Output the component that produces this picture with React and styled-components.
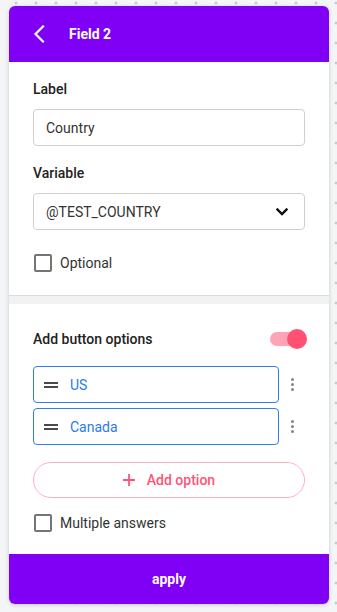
import React, { useState } from 'react';
import styled, { createGlobalStyle } from 'styled-components';

const GlobalStyle = createGlobalStyle`
  html, body {
    margin: 0;
    padding: 0;
  }
  body {
    font-family: Roboto, "Liberation Sans", sans-serif;
    background-color: #f3f5f7;
    background-image: radial-gradient(circle, #c8ccd1 1.3px, transparent 1.7px);
    background-size: 20px 20px;
    background-position: 6px -7px;
    min-height: 612px;
  }
  * {
    box-sizing: border-box;
  }
`;

const Page = styled.div`
  padding: 6px 0 0 9px;
  height: 612px;
`;

const Card = styled.div`
  width: 320px;
  height: 598px;
  background: #fff;
  border-radius: 6px;
  overflow: hidden;
  box-shadow: 0 1px 4px rgba(0, 0, 0, 0.18);
  display: flex;
  flex-direction: column;
`;

const Header = styled.div`
  height: 56px;
  background: #7f00f5;
  display: flex;
  align-items: center;
  padding-left: 24px;
  gap: 24px;
  color: #fff;
`;

const BackButton = styled.button`
  border: none;
  background: none;
  padding: 0;
  width: 12px;
  height: 18px;
  display: flex;
  cursor: pointer;
`;

const HeaderTitle = styled.h1`
  margin: 0;
  font-size: 14px;
  font-weight: 700;
  line-height: 20px;
`;

const Section = styled.div`
  padding: ${(p) => p.$pad};
  display: flex;
  flex-direction: column;
`;

const FieldLabel = styled.div`
  font-size: 14px;
  font-weight: 500;
  line-height: 20px;
  color: #222;
  margin: ${(p) => p.$top || 0}px 0 ${(p) => (p.$flat ? 0 : 10)}px;
`;

const Box = styled.div`
  height: 37px;
  border: 1px solid #cfcfcf;
  border-radius: 4px;
  display: flex;
  align-items: center;
  padding: 0 16px 0 12px;
  font-size: 14px;
  color: #333;
  justify-content: space-between;
`;

const CheckRow = styled.label`
  display: flex;
  align-items: center;
  gap: 8px;
  height: 18px;
  font-size: 14px;
  color: #333;
  margin-top: ${(p) => p.$top}px;
  cursor: pointer;
`;

const CheckBox = styled.span`
  width: 18px;
  height: 18px;
  border: 2px solid #757575;
  border-radius: 2px;
  margin-left: 1px;
`;

const Separator = styled.div`
  height: 9px;
  border-top: 1px solid #dcdcdc;
  background: #f2f2f2;
`;

const ToggleRow = styled.div`
  display: flex;
  align-items: center;
  justify-content: space-between;
  height: 20px;
`;

const Toggle = styled.button`
  position: relative;
  width: 37px;
  height: 20px;
  border: none;
  background: none;
  padding: 0;
  margin-right: -2px;
  cursor: pointer;

  &::before {
    content: '';
    position: absolute;
    left: 0;
    top: 3px;
    width: 30px;
    height: 14px;
    border-radius: 7px;
    background: ${(p) => (p.$on ? '#ffa4b6' : '#bdbdbd')};
  }

  &::after {
    content: '';
    position: absolute;
    top: 0;
    left: ${(p) => (p.$on ? '17px' : '0')};
    width: 20px;
    height: 20px;
    border-radius: 50%;
    background: ${(p) => (p.$on ? '#ff5273' : '#f5f5f5')};
  }
`;

const Options = styled.div`
  display: flex;
  flex-direction: column;
  gap: 5px;
  margin-top: 17px;
`;

const OptionRow = styled.div`
  display: flex;
  align-items: center;
`;

const OptionInput = styled.div`
  flex: 1;
  height: 37px;
  border: 1px solid #2d7ff0;
  border-radius: 4px;
  display: flex;
  align-items: center;
  padding-left: 10px;
  gap: 12px;
  font-size: 14px;
  color: #2a7af0;
`;

const Handle = styled.span`
  width: 14px;
  height: 6px;
  border-top: 2px solid #4a4a4a;
  border-bottom: 2px solid #4a4a4a;
`;

const Kebab = styled.span`
  width: 26px;
  display: flex;
  flex-direction: column;
  align-items: center;
  gap: 2px;
  span {
    width: 3px;
    height: 3px;
    border-radius: 50%;
    background: #858585;
  }
`;

const AddButton = styled.button`
  margin-top: 17px;
  height: 36px;
  border: 1px solid #ffb0bf;
  border-radius: 18px;
  background: #fff;
  color: #ff5475;
  font-family: inherit;
  font-size: 14px;
  font-weight: 500;
  display: flex;
  align-items: center;
  justify-content: center;
  gap: 12px;
  cursor: pointer;
`;

const Spacer = styled.div`
  flex: 1;
`;

const Footer = styled.button`
  height: 50px;
  border: none;
  background: #7f00f5;
  color: #fff;
  font-family: inherit;
  font-size: 14px;
  font-weight: 700;
  cursor: pointer;
`;

const Chevron = ({ d, w, h, vb, color, sw }) => (
  <svg width={w} height={h} viewBox={vb} fill="none">
    <path d={d} stroke={color} strokeWidth={sw} strokeLinecap="square" strokeLinejoin="miter" />
  </svg>
);

export default function App() {
  const [on, setOn] = useState(true);
  const options = ['US', 'Canada'];

  return (
    <Page>
      <GlobalStyle />
      <Card>
        <Header>
          <BackButton aria-label="back">
            <Chevron d="M10 1.5 L2.5 9 L10 16.5" w={12} h={18} vb="0 0 12 18" color="#fff" sw={2.2} />
          </BackButton>
          <HeaderTitle>Field 2</HeaderTitle>
        </Header>

        <Section $pad="17px 24px 23px">
          <FieldLabel>Label</FieldLabel>
          <Box>Country</Box>
          <FieldLabel $top={17}>Variable</FieldLabel>
          <Box>
            @TEST_COUNTRY
            <Chevron d="M1.5 1.5 L6 6 L10.5 1.5" w={12} h={8} vb="0 0 12 8" color="#111" sw={2.4} />
          </Box>
          <CheckRow $top={24}>
            <CheckBox />
            Optional
          </CheckRow>
        </Section>

        <Separator />

        <Section $pad="25px 24px 0">
          <ToggleRow>
            <FieldLabel $flat>Add button options</FieldLabel>
            <Toggle $on={on} onClick={() => setOn(!on)} aria-label="toggle" />
          </ToggleRow>
          <Options>
            {options.map((o) => (
              <OptionRow key={o}>
                <OptionInput>
                  <Handle />
                  {o}
                </OptionInput>
                <Kebab>
                  <span />
                  <span />
                  <span />
                </Kebab>
              </OptionRow>
            ))}
          </Options>
          <AddButton>
            <svg width="12" height="12" viewBox="0 0 12 12">
              <path d="M6 0 V12 M0 6 H12" stroke="#ff5475" strokeWidth="1.8" />
            </svg>
            Add option
          </AddButton>
          <CheckRow $top={16}>
            <CheckBox />
            Multiple answers
          </CheckRow>
        </Section>

        <Spacer />
        <Footer>apply</Footer>
      </Card>
    </Page>
  );
}
